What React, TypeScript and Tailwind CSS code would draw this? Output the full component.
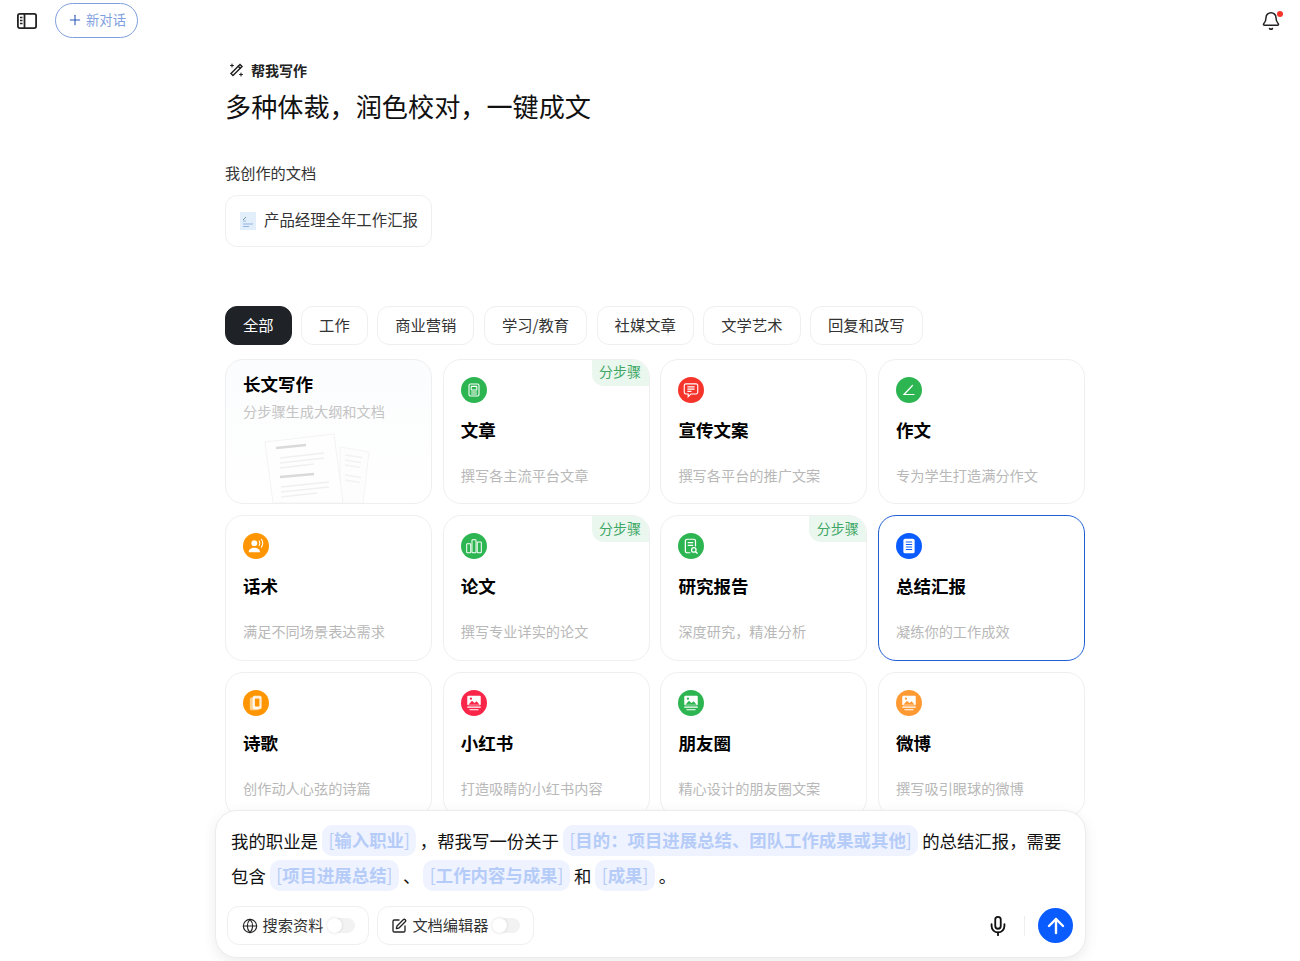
import React from 'react';
import { ArrowUp, Bell, Globe, Mic, Plus, SquarePen } from 'lucide-react';

const tabs = ['全部', '工作', '商业营销', '学习/教育', '社媒文章', '文学艺术', '回复和改写'];

const IconDoc = () => (
  <svg viewBox="0 0 16 16" className="h-4 w-4" fill="none" stroke="white" strokeWidth="1.1">
    <rect x="3" y="2" width="10" height="12" rx="1.5" />
    <rect x="5.2" y="4.4" width="5.6" height="3.6" rx="0.5" />
    <path d="M5.2 10h5.6M5.2 12h5.6" />
  </svg>
);
const IconChat = () => (
  <svg viewBox="0 0 16 16" className="h-[18px] w-[18px]" fill="none" stroke="white" strokeWidth="1">
    <path d="M3.5 2.5h9a1.5 1.5 0 0 1 1.5 1.5v6a1.5 1.5 0 0 1-1.5 1.5H8l-2.5 2.4v-2.4h-2A1.5 1.5 0 0 1 2 10V4a1.5 1.5 0 0 1 1.5-1.5z" />
    <path d="M4.8 5.2h6.4M4.8 7.2h6.4M4.8 9.2h3.6" />
  </svg>
);
const IconAngle = () => (
  <svg viewBox="0 0 16 16" className="h-4 w-4" fill="none" stroke="white" strokeWidth="1.2" strokeLinecap="round">
    <path d="M11.5 3.5 3 12.5h10" />
  </svg>
);
const IconSpeak = () => (
  <svg viewBox="0 0 16 16" className="h-[18px] w-[18px]" fill="none">
    <circle cx="6.5" cy="5.5" r="2.6" fill="white" />
    <path d="M1.5 13.5c0-2.6 2.2-4 5-4s5 1.4 5 4z" fill="white" />
    <path d="M10.8 3.5c.8 1.2.8 2.8 0 4M12.8 2c1.4 2 1.4 5 0 7" stroke="white" strokeWidth="1" strokeLinecap="round" />
  </svg>
);
const IconBars = () => (
  <svg viewBox="0 0 16 16" className="h-[18px] w-[18px]" fill="none" stroke="white" strokeWidth="0.9">
    <rect x="1.5" y="6" width="3.6" height="8" rx="0.6" />
    <rect x="6.2" y="2.5" width="3.6" height="11.5" rx="0.6" />
    <rect x="10.9" y="4.5" width="3.6" height="9.5" rx="0.6" />
  </svg>
);
const IconReport = () => (
  <svg viewBox="0 0 16 16" className="h-[18px] w-[18px]" fill="none" stroke="white" strokeWidth="1.1" strokeLinecap="round">
    <path d="M7 14H4.5A1.5 1.5 0 0 1 3 12.5v-9A1.5 1.5 0 0 1 4.5 2h6A1.5 1.5 0 0 1 12 3.5V8" />
    <path d="M5.5 5h4M5.5 7.5h4" />
    <circle cx="10.5" cy="11.5" r="2" />
    <path d="m12 13 1.5 1.5" />
  </svg>
);
const IconNote = () => (
  <svg viewBox="0 0 16 16" className="h-[18px] w-[18px]" fill="none">
    <rect x="3" y="1.5" width="10" height="13" rx="1.5" fill="white" />
    <path d="M5.2 4.5h5.6M5.2 6.7h5.6M5.2 8.9h5.6M5.2 11.1h5.6" stroke="#0b5cff" strokeWidth="0.9" />
  </svg>
);
const IconPoem = () => (
  <svg viewBox="0 0 16 16" className="h-[18px] w-[18px]" fill="none">
    <rect x="2.5" y="3" width="8" height="11.5" rx="1.5" fill="white" fillOpacity="0.55" />
    <rect x="5" y="1.5" width="8" height="12" rx="1.5" fill="white" fillOpacity="0.85" />
    <rect x="7" y="4" width="4" height="7" rx="0.8" fill="#ff9500" />
  </svg>
);
const IconPicture = ({ color }: { color: string }) => (
  <svg viewBox="0 0 16 16" className="h-[18px] w-[18px]" fill="none">
    <rect x="2" y="1.5" width="12" height="8.5" rx="1" fill="white" />
    <path d="m3 9.5 3.2-3.5 2.3 2 1.8-1.5 2.7 3z" fill={color} />
    <circle cx="5.3" cy="4.2" r="1" fill={color} />
    <path d="M2 11.7h12M4 14h8" stroke="white" strokeWidth="1" />
  </svg>
);

type CardData = { title: string; desc: string; bg: string; icon: React.ReactNode; step?: boolean; active?: boolean };

const cards: CardData[] = [
  { title: '文章', desc: '撰写各主流平台文章', bg: 'bg-[#2db552]', icon: <IconDoc />, step: true },
  { title: '宣传文案', desc: '撰写各平台的推广文案', bg: 'bg-[#f5352c]', icon: <IconChat /> },
  { title: '作文', desc: '专为学生打造满分作文', bg: 'bg-[#2db552]', icon: <IconAngle /> },
  { title: '话术', desc: '满足不同场景表达需求', bg: 'bg-[#ff9500]', icon: <IconSpeak /> },
  { title: '论文', desc: '撰写专业详实的论文', bg: 'bg-[#2db552]', icon: <IconBars />, step: true },
  { title: '研究报告', desc: '深度研究\uFF0C精准分析', bg: 'bg-[#2db552]', icon: <IconReport />, step: true },
  { title: '总结汇报', desc: '凝练你的工作成效', bg: 'bg-[#0b5cff]', icon: <IconNote />, active: true },
  { title: '诗歌', desc: '创作动人心弦的诗篇', bg: 'bg-[#ff9500]', icon: <IconPoem /> },
  { title: '小红书', desc: '打造吸睛的小红书内容', bg: 'bg-[#f9264a]', icon: <IconPicture color="#f9264a" /> },
  { title: '朋友圈', desc: '精心设计的朋友圈文案', bg: 'bg-[#2db552]', icon: <IconPicture color="#2db552" /> },
  { title: '微博', desc: '撰写吸引眼球的微博', bg: 'bg-[#ff9a33]', icon: <IconPicture color="#ff9a33" /> },
];

const Card = ({ title, desc, bg, icon, step, active }: CardData) => (
  <div className={`relative overflow-hidden rounded-[18px] border bg-white px-[17px] pt-[17px] ${active ? 'border-[#1f5fd6]' : 'border-[#efefef]'}`}>
    {step && (
      <span className="absolute right-0 top-0 flex h-[26px] w-[57px] items-center justify-center rounded-bl-[12px] bg-[#eaf7ef] pb-[2px] text-[14px] text-[#3fa765]">
        分步骤
      </span>
    )}
    <div className={`flex h-[26px] w-[26px] items-center justify-center rounded-full ${bg}`}>{icon}</div>
    <div className="mt-[15px] text-[17.5px] font-bold leading-[24px] text-black">{title}</div>
    <div className="mt-[23px] text-[14.2px] leading-[20px] text-[#b8b8b8]">{desc}</div>
  </div>
);

const Papers = () => (
  <svg viewBox="0 0 130 74" className="absolute bottom-0 left-[36px] h-[74px] w-[130px]" fill="none">
    <path d="M78 18 107 23 101 74H78z" fill="#fdfdfd" stroke="#f4f4f4" />
    <path d="M83 26l17 2.5M83 31l16 2.5M83 36l15 2.5M83 46l16 2.5M83 51l15 2.5" stroke="#f2f2f2" strokeWidth="1.5" />
    <path d="M3 13 72 5l9 69H11z" fill="#fefefe" stroke="#f3f3f3" />
    <path d="M14 19l30-3" stroke="#dadada" strokeWidth="2.5" />
    <path d="M18 29l44-5M18 34l44-5M18 39l34-4M19 58l48-5M19 63l48-5M19 68l36-4" stroke="#f0f0f0" strokeWidth="1.4" />
    <path d="M18 48l34-3" stroke="#dadada" strokeWidth="2.5" />
  </svg>
);

const Chip = ({ children, className = '' }: { children: string; className?: string }) => (
  <span className={`mt-[2px] inline-block h-[31px] rounded-[10px] bg-[#eef3ff] px-[6.5px] align-top text-[17.4px] font-semibold leading-[30px] text-[#b6ccf8] ${className}`}>
    <span className="font-normal">[</span>
    {children}
    <span className="font-normal">]</span>
  </span>
);

const Toggle = () => (
  <span className="relative ml-[-2px] inline-block h-[15px] w-[28px] rounded-full bg-[#f2f2f2]">
    <span className="absolute left-0 top-0 h-[15px] w-[15px] rounded-full bg-white shadow-[0_0_3px_rgba(0,0,0,0.15)]" />
  </span>
);

export default function App() {
  return (
    <div className="relative h-[961px] w-[1300px] overflow-hidden bg-white font-['Noto_Sans_CJK_SC','Liberation_Sans',sans-serif] text-[#222]">
      <header className="flex h-[41px] items-start justify-between pl-[17px] pr-[19px]">
        <div className="flex items-center">
          <svg viewBox="0 0 20 16" className="mt-[4px] h-[16px] w-[20px]" fill="none" stroke="#222" strokeWidth="1.8">
            <rect x="0.9" y="0.9" width="18.2" height="14.2" rx="1.8" />
            <path d="M7.5 1v14" />
            <path d="M3 4.5h2.5M3 7.5h2.5M3 10.5h2.5" strokeWidth="1.5" />
          </svg>
          <button className="ml-[18px] mt-[3px] flex h-[35px] w-[83px] items-center justify-center gap-[3px] rounded-full border border-[#7f9fdc] pb-[2px] text-[13.3px] text-[#7f9fe0]">
            <Plus className="h-[16px] w-[16px] text-[#2856b6]" strokeWidth={1.6} />
            新对话
          </button>
        </div>
        <div className="relative mt-[11px]">
          <Bell className="h-[20px] w-[20px] text-[#222]" strokeWidth={1.8} />
          <span className="absolute right-[-2px] top-0 h-[6px] w-[6px] rounded-full bg-[#f5352c]" />
        </div>
      </header>

      <main className="ml-[225px] w-[860px]">
        <div className="mt-[19px] flex h-[20px] items-center gap-[7px] pl-[3px] text-[14px] font-bold text-[#222]">
          <svg viewBox="0 0 16 16" className="h-[16px] w-[16px]" fill="none" stroke="#222" strokeWidth="1.5" strokeLinecap="round">
            <path d="M12 2.5 14 4.5 5 13.5 3 11.5z" />
            <path d="m10.2 4.3 2 2" />
            <path d="M4 2v3M2.5 3.5h3M13 11v3M11.5 12.5h3" strokeWidth="1.1" />
          </svg>
          帮我写作
        </div>
        <h1 className="mt-[8px] text-[26.15px] font-normal leading-[36px] text-[#111]">{'多种体裁\uFF0C润色校对\uFF0C一键成文'}</h1>

        <div className="mt-[38px] text-[15.2px] leading-[20px] text-[#333]">我创作的文档</div>
        <div className="mt-[13px] flex h-[52px] w-[207px] items-center gap-[8px] rounded-[12px] border border-[#efefef] pb-[2px] pl-[14px] text-[15.4px] text-[#333]">
          <svg viewBox="0 0 16 18" className="mt-[2px] h-[18px] w-[16px]" fill="none">
            <rect width="16" height="18" fill="#e3eefb" />
            <path d="M3 9h3M3 12h10M3 14.5h6" stroke="#8fb4e3" strokeWidth="1" />
            <path d="M3 8 6 5" stroke="#6f9a9a" strokeWidth="1" />
          </svg>
          产品经理全年工作汇报
        </div>

        <nav className="mt-[59px] flex gap-[9.5px]">
          {tabs.map((t, i) => (
            <button
              key={t}
              className={`h-[39px] rounded-[12px] border px-[17px] pb-[2px] text-[15.3px] ${i === 0 ? 'border-[#1f2328] bg-[#1f2328] text-white' : 'border-[#efefef] bg-white text-[#333]'}`}
            >
              {t}
            </button>
          ))}
        </nav>

        <section className="mt-[13.75px] grid grid-cols-4 auto-rows-[145.5px] gap-x-[10.8px] gap-y-[11px]">
          <div className="relative overflow-hidden rounded-[18px] border border-[#efefef] bg-gradient-to-b from-[#fbfcfd] to-white px-[17px] pt-[12px]">
            <div className="text-[17.5px] font-bold leading-[24px] text-black">长文写作</div>
            <div className="mt-[5px] text-[14.2px] leading-[20px] text-[#c4c4c4]">分步骤生成大纲和文档</div>
            <Papers />
          </div>
          {cards.map(c => (
            <Card key={c.title} {...c} />
          ))}
        </section>
      </main>

      <div className="absolute left-[215px] top-[810px] h-[148px] w-[871px] rounded-[22px] border border-[#ececec] bg-white px-[11px] pt-[12px] shadow-[0_4px_14px_rgba(0,0,0,0.08)]">
        <div className="pl-[4px] pr-[5px] text-[17.4px] leading-[35px] text-[#111]">
          我的职业是
          <Chip className="ml-[4px] mr-[3.5px]">输入职业</Chip>
          {'\uFF0C帮我写一份关于'}
          <Chip className="mx-[4px]">{'目的\uFF1A项目进展总结、团队工作成果或其他'}</Chip>
          {'的总结汇报\uFF0C需要'}
          <br />
          包含
          <Chip className="mx-[4px]">项目进展总结</Chip>
          、
          <Chip className="ml-[3px] mr-[4px]">工作内容与成果</Chip>
          和
          <Chip className="mx-[4px]">成果</Chip>
          。
        </div>
        <div className="mt-[13px] flex items-center justify-between">
          <div className="flex gap-[8px]">
            <button className="flex h-[39px] w-[142px] items-center justify-center gap-[5px] rounded-[12px] border border-[#efefef] text-[15.25px] text-[#333]">
              <Globe className="h-[16px] w-[16px] text-[#222]" strokeWidth={1.7} />
              <span className="pb-[2px]">搜索资料</span>
              <Toggle />
            </button>
            <button className="flex h-[39px] w-[157px] items-center justify-center gap-[5px] rounded-[12px] border border-[#efefef] text-[15.25px] text-[#333]">
              <SquarePen className="h-[16px] w-[16px] text-[#222]" strokeWidth={2} />
              <span className="pb-[2px]">文档编辑器</span>
              <Toggle />
            </button>
          </div>
          <div className="flex items-center pr-[1px]">
            <Mic className="h-[22px] w-[22px] text-[#111]" strokeWidth={2} />
            <span className="ml-[15px] mr-[13px] h-[20px] w-px bg-[#eeeeee]" />
            <button className="flex h-[35px] w-[35px] items-center justify-center rounded-full bg-[#0b5cff]">
              <ArrowUp className="h-[24px] w-[24px] text-white" strokeWidth={2.4} />
            </button>
          </div>
        </div>
      </div>
    </div>
  );
}
